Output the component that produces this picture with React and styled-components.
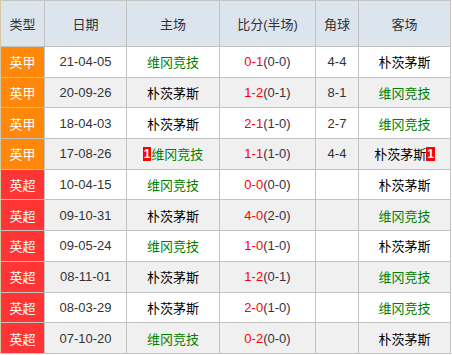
import React from 'react';
import styled, { createGlobalStyle } from 'styled-components';

const Global = createGlobalStyle`
	html, body {
		margin: 0;
		padding: 0;
		background: #fff;
	}
	body {
		font-family: "Liberation Sans", "Noto Sans CJK SC", sans-serif;
		font-size: 13px;
	}
`;

const Board = styled.div`
	display: grid;
	grid-template-columns: 43px 81px 92px 95px 42px 91px;
	grid-template-rows: 45px repeat(10, 29.7px);
	gap: 1px;
	width: 451px;
	box-sizing: border-box;
	background: #c2c2c2;
	padding: 1px 1px 1px 0;
	border-left: 1px solid #d6c6a2;
`;

const HeadCell = styled.div`
	display: flex;
	align-items: center;
	justify-content: center;
	background: #dce4ee;
	color: #333;
	font-size: 13px;
`;

const Cell = styled.div`
	display: flex;
	align-items: center;
	justify-content: center;
	background: ${p => (p.$alt ? '#f0f0f0' : '#fff')};
	color: #333;
	white-space: nowrap;
`;

const TypeCell = styled(Cell)`
	background: ${p => (p.$league === '英甲' ? '#ff880a' : '#ff3434')};
	color: #fff;
`;

const Team = styled.span`
	color: ${p => (p.$green ? '#008000' : '#000')};
	display: inline-flex;
	align-items: center;
`;

const Badge = styled.span`
	display: inline-block;
	background: #ff0000;
	color: #fff;
	font-weight: bold;
	font-size: 12px;
	line-height: 14px;
	padding: 0 1px;
`;

const Full = styled.span`
	color: #ff0000;
`;

const Half = styled.span`
	color: #334;
`;

const WIGAN = '维冈竞技';
const PORTS = '朴茨茅斯';

const rows = [
	{ t: '英甲', d: '21-04-05', h: WIGAN, s: '0-1', hs: '0-0', c: '4-4', a: PORTS },
	{ t: '英甲', d: '20-09-26', h: PORTS, s: '1-2', hs: '0-1', c: '8-1', a: WIGAN },
	{ t: '英甲', d: '18-04-03', h: PORTS, s: '2-1', hs: '1-0', c: '2-7', a: WIGAN },
	{ t: '英甲', d: '17-08-26', h: WIGAN, s: '1-1', hs: '1-0', c: '4-4', a: PORTS, hb: 1, ab: 1 },
	{ t: '英超', d: '10-04-15', h: WIGAN, s: '0-0', hs: '0-0', c: '', a: PORTS },
	{ t: '英超', d: '09-10-31', h: PORTS, s: '4-0', hs: '2-0', c: '', a: WIGAN },
	{ t: '英超', d: '09-05-24', h: WIGAN, s: '1-0', hs: '1-0', c: '', a: PORTS },
	{ t: '英超', d: '08-11-01', h: PORTS, s: '1-2', hs: '0-1', c: '', a: WIGAN },
	{ t: '英超', d: '08-03-29', h: PORTS, s: '2-0', hs: '1-0', c: '', a: WIGAN },
	{ t: '英超', d: '07-10-20', h: WIGAN, s: '0-2', hs: '0-0', c: '', a: PORTS },
];

const heads = ['类型', '日期', '主场', '比分(半场)', '角球', '客场'];

export default function App() {
	return (
		<>
			<Global />
			<Board>
				{heads.map(h => (
					<HeadCell key={h}>{h}</HeadCell>
				))}
				{rows.map((r, i) => {
					const alt = i % 2 === 1;
					return (
						<React.Fragment key={r.d}>
							<TypeCell $league={r.t}>{r.t}</TypeCell>
							<Cell $alt={alt}>{r.d}</Cell>
							<Cell $alt={alt}>
								<Team $green={r.h === WIGAN}>
									{r.hb ? <Badge>{r.hb}</Badge> : null}
									{r.h}
								</Team>
							</Cell>
							<Cell $alt={alt}>
								<Full>{r.s}</Full>
								<Half>({r.hs})</Half>
							</Cell>
							<Cell $alt={alt}>{r.c}</Cell>
							<Cell $alt={alt}>
								<Team $green={r.a === WIGAN}>
									{r.a}
									{r.ab ? <Badge>{r.ab}</Badge> : null}
								</Team>
							</Cell>
						</React.Fragment>
					);
				})}
			</Board>
		</>
	);
}
